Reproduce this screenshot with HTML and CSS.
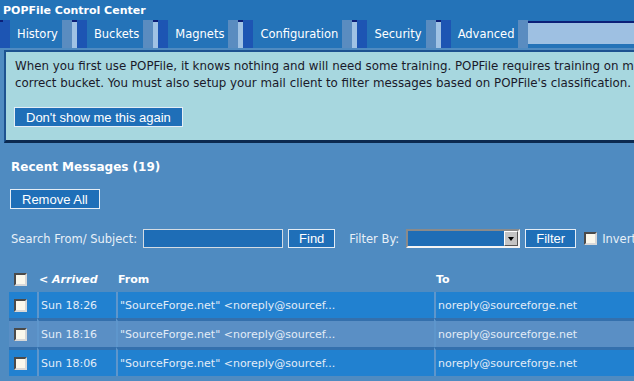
FILE: index.html
```html
<!DOCTYPE html>
<html lang="en">
<head>
  <meta charset="UTF-8" />
  <title>POPFile Control Center</title>
  <link rel="stylesheet" href="styles.css">
</head>
<body>
  <div class="titlebar">POPFile Control Center</div>

  <nav class="tabs">
    <div class="tab first"><span class="tab-cap"></span><span class="tab-label">History</span><span class="tab-end"></span></div>
    <div class="tab"><span class="tab-cap"></span><span class="tab-label">Buckets</span><span class="tab-end"></span></div>
    <div class="tab"><span class="tab-cap"></span><span class="tab-label">Magnets</span><span class="tab-end"></span></div>
    <div class="tab"><span class="tab-cap"></span><span class="tab-label">Configuration</span><span class="tab-end"></span></div>
    <div class="tab"><span class="tab-cap"></span><span class="tab-label">Security</span><span class="tab-end"></span></div>
    <div class="tab"><span class="tab-cap"></span><span class="tab-label">Advanced</span><span class="tab-end"></span></div>
    <div class="tab-rest"></div>
  </nav>

  <div class="notice">
    <p>When you first use POPFile, it knows nothing and will need some training. POPFile requires training on messages in every bucket, training occurs when you reclassify a message that POPFile classified incorrectly into the<br>correct bucket. You must also setup your mail client to filter messages based on POPFile's classification. Information on setting up your client filtering can be found at the POPFile Documentation Project.</p>
    <button class="btn">Don't show me this again</button>
  </div>

  <h2 class="heading">Recent Messages (19)</h2>
  <button class="btn remove">Remove All</button>

  <div class="search">
    <span class="label">Search From/ Subject:</span>
    <span class="field"></span>
    <button class="btn small">Find</button>
    <span class="label filter-label">Filter By:</span>
    <span class="select"><span class="select-arrow"></span></span>
    <button class="btn small">Filter</button>
    <span class="check"></span>
    <span class="label">Invert</span>
  </div>

  <table class="messages">
    <thead>
      <tr>
        <th class="c-check"><span class="check"></span></th>
        <th class="c-date"><em>&lt; Arrived</em></th>
        <th class="c-from">From</th>
        <th class="c-to">To</th>
      </tr>
    </thead>
    <tbody>
      <tr class="row hi">
        <td class="c-check"><span class="check"></span></td>
        <td>Sun 18:26</td>
        <td>"SourceForge.net" &lt;noreply@sourcef...</td>
        <td>noreply@sourceforge.net</td>
      </tr>
      <tr class="row">
        <td class="c-check"><span class="check"></span></td>
        <td>Sun 18:16</td>
        <td>"SourceForge.net" &lt;noreply@sourcef...</td>
        <td>noreply@sourceforge.net</td>
      </tr>
      <tr class="row hi">
        <td class="c-check"><span class="check"></span></td>
        <td>Sun 18:06</td>
        <td>"SourceForge.net" &lt;noreply@sourcef...</td>
        <td>noreply@sourceforge.net</td>
      </tr>
    </tbody>
  </table>
</body>
</html>
```

FILE: styles.css
```css
body {
  margin: 0;
  background: #4f8bc1;
  font-family: "DejaVu Sans", Verdana, sans-serif;
  font-size: 12px;
  color: #fff;
  overflow: hidden;
}

/* Title and tabs */
.titlebar {
  height: 20px;
  line-height: 21px;
  padding-left: 3px;
  background: #2473b8;
  font-weight: bold;
  font-size: 11px;
}
.tabs {
  display: flex;
  height: 28px;
  background: #2473b8;
}
.tab {
  display: flex;
  flex-shrink: 0;
}
.tab-cap {
  width: 15px;
  background:
    linear-gradient(#0b1f78, #0b1f78) 0 0 / 5px 2px no-repeat,
    linear-gradient(to right, #a0c2e4 5px, #1d55b3 5px);
}
.tab.first .tab-cap {
  width: 10px;
  background:
    linear-gradient(#0b1f78, #0b1f78) 0 0 / 3px 2px no-repeat,
    #1d55b3;
}
.tab-label {
  padding: 0 4px 0 7px;
  line-height: 28px;
  font-size: 11.5px;
}
.tab-end {
  width: 10px;
  background: #5a8cc0;
}
.tab-rest {
  flex: 1;
  height: 21px;
  margin-top: 1px;
  background: #9ec0e2;
  border-top: 2px solid #0b1f78;
}

/* Notice box */
.notice {
  margin: 2px 0 0 4px;
  padding: 6px 9px 13px;
  background: #a7d7df;
  border-top: 2px solid #1d5290;
  border-left: 2px solid #1d5290;
  border-bottom: 3px solid #0c2a50;
  color: #1a1a2a;
  white-space: nowrap;
}
.notice p {
  margin: 0 0 15px;
  line-height: 17px;
  font-size: 11.85px;
}
.notice .btn {
  margin-left: -1px;
}

.btn {
  height: 20px;
  padding: 0 11px;
  background: #1f6fb8;
  border: 1px solid #e4edf6;
  color: #fff;
  font-family: "Liberation Sans", Arial, sans-serif;
  font-size: 13px;
  cursor: pointer;
}
.btn.small {
  padding: 0 10px;
  height: 19px;
}

.heading {
  margin: 16px 0 0 11px;
  font-size: 12px;
  line-height: 16px;
}
.remove {
  display: block;
  margin: 14px 0 0 10px;
}

/* Search / filter */
.search {
  display: flex;
  align-items: center;
  gap: 5px;
  margin: 20px 0 0 11px;
  height: 19px;
  white-space: nowrap;
}
.search > * {
  flex-shrink: 0;
}
.label {
  font-size: 11.5px;
  color: #e8f0f8;
}
.field {
  width: 138px;
  height: 17px;
  background: #1e6db6;
  border: 1px solid #d4dce4;
  margin-left: 1px;
}
.filter-label {
  margin-left: 9px;
}
.select {
  display: flex;
  justify-content: flex-end;
  align-items: center;
  width: 110px;
  height: 15px;
  margin-left: 2px;
  background: #1e6db6;
  border: 2px solid;
  border-color: #8a8a8a #f4f4f4 #f4f4f4 #8a8a8a;
}
.select-arrow {
  width: 14px;
  height: 15px;
  background: #c4c4c4;
  box-sizing: border-box;
  border: 1px solid;
  border-color: #fff #555 #555 #fff;
  position: relative;
}
.select-arrow::after {
  content: "";
  position: absolute;
  left: 3px;
  top: 5px;
  border: 3px solid transparent;
  border-top: 4px solid #000;
  border-bottom: 0;
}

.check {
  display: inline-block;
  width: 13px;
  height: 13px;
  box-sizing: border-box;
  background: #fbf8ec;
  border: 2px solid;
  border-color: #4a4a4a #d8d8d8 #d8d8d8 #4a4a4a;
  vertical-align: middle;
}
.search .check {
  margin-left: 3px;
}

/* Message table */
.messages {
  margin: 18px 0 0 9px;
  width: 720px;
  table-layout: fixed;
  border-collapse: separate;
  border-spacing: 0;
  white-space: nowrap;
}
.messages th,
.messages td {
  box-sizing: border-box;
  padding: 0 0 0 2px;
  text-align: left;
  font-size: 11px;
  overflow: hidden;
}
.messages th {
  height: 26px;
  font-weight: bold;
}
.messages td {
  height: 26px;
  color: #e2ecf7;
}
.messages .c-check {
  width: 28px;
  padding-left: 5px;
}
.messages .c-date {
  width: 79px;
}
.messages .c-from {
  width: 318px;
}
.row td {
  background: #5a8fc5;
}
.row.hi td {
  background: #2181d0;
}
.row td + td {
  border-left: 2px solid #5e96cc;
}
.row + .row td {
  border-top: 3px solid #3470ad;
  height: 29px;
}
```
